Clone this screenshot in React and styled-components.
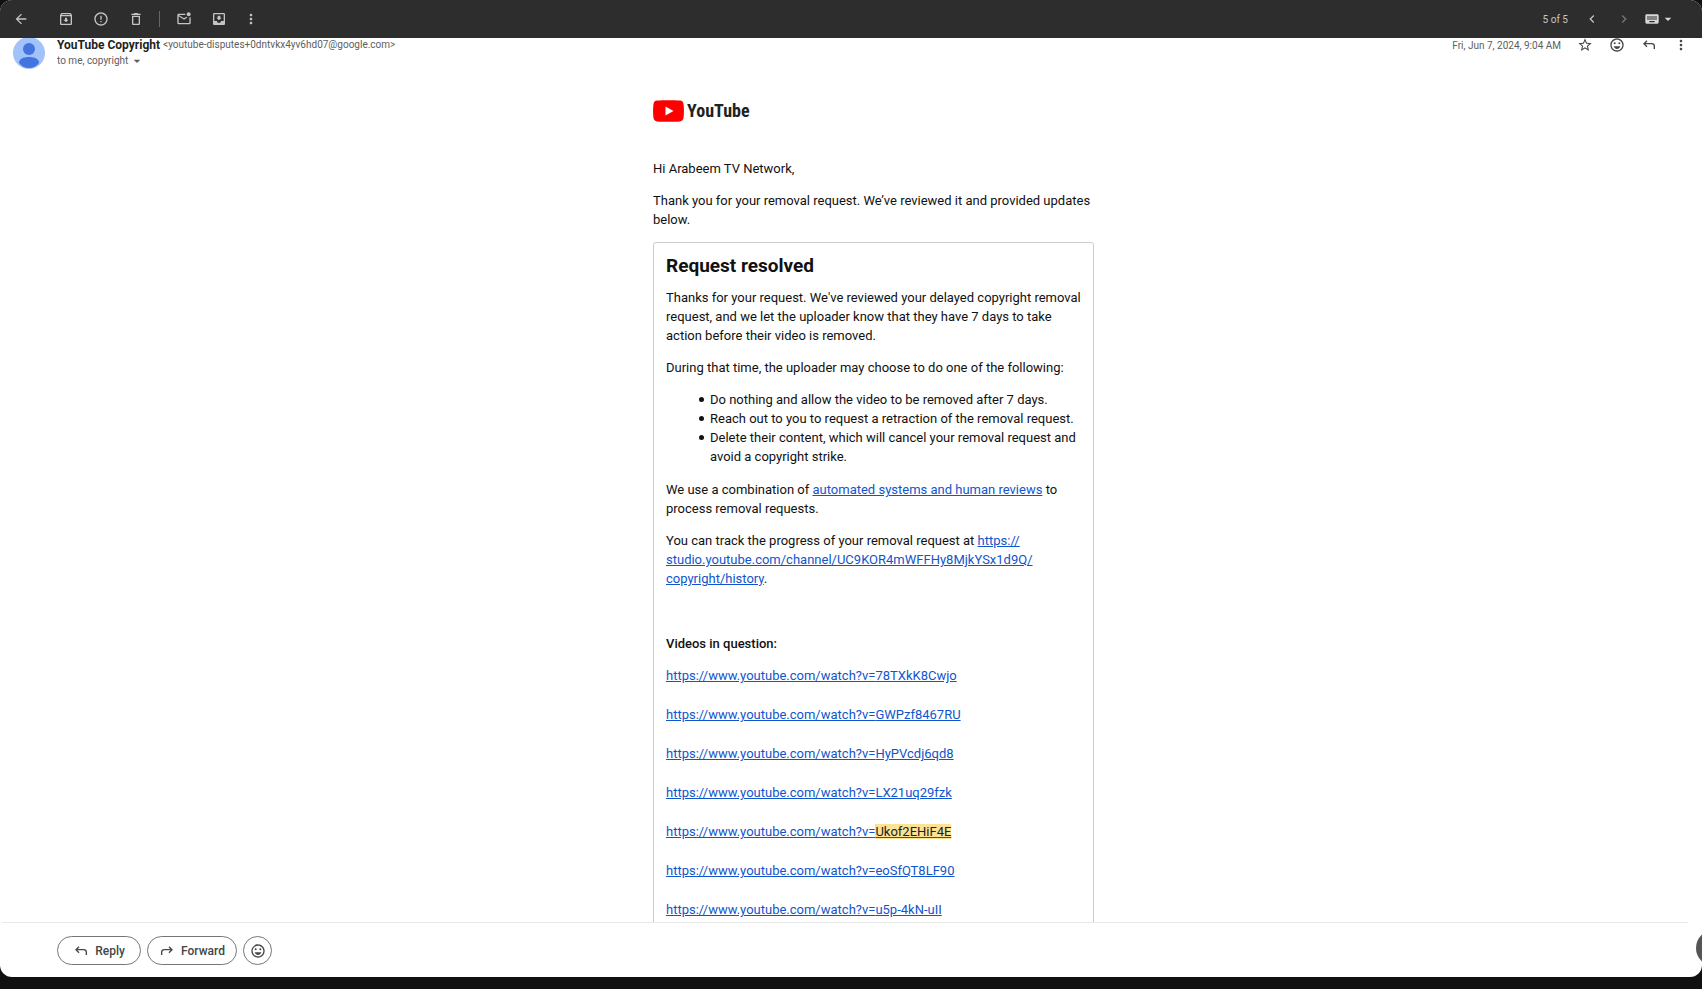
/**
 * Mail message view
 *  * Toolbar on top, the opened message in the middle and the reply actions at the bottom
 */
import React from 'react'
import styled, { createGlobalStyle } from 'styled-components'
import {
    MdArrowBack,
    MdOutlineArchive,
    MdErrorOutline,
    MdDeleteOutline,
    MdOutlineMarkEmailUnread,
    MdMoveToInbox,
    MdMoreVert,
    MdChevronLeft,
    MdChevronRight,
    MdKeyboard,
    MdArrowDropDown,
    MdStarBorder,
    MdOutlineEmojiEmotions
} from 'react-icons/md'

const VIDEOS = [
    { id: '78TXkK8Cwjo' },
    { id: 'GWPzf8467RU' },
    { id: 'HyPVcdj6qd8' },
    { id: 'LX21uq29fzk' },
    { id: 'Ukof2EHiF4E', found: true },
    { id: 'eoSfQT8LF90' },
    { id: 'u5p-4kN-uII' }
]

/**
 * Curved arrow of the reply and forward buttons
 */
function ReplyIcon({ flip }) {
    return (
        <svg width="16" height="16" viewBox="0 0 24 24" fill="none" stroke="currentColor" strokeWidth="2" aria-hidden="true">
            <g transform={flip ? 'translate(24 0) scale(-1 1)' : undefined}>
                <path d="M9 5.500 4.500 10 9 14.500" />
                <path d="M4.500 10H16a4 4 0 0 1 4 4v4" />
            </g>
        </svg>
    )
}

function Toolbar() {
    return (
        <Bar>
            <BackButton aria-label="Back to inbox"><MdArrowBack /></BackButton>
            <ToolButton aria-label="Archive"><MdOutlineArchive /></ToolButton>
            <ToolButton aria-label="Report spam"><MdErrorOutline /></ToolButton>
            <ToolButton aria-label="Delete"><MdDeleteOutline /></ToolButton>
            <Separator />
            <ToolButton aria-label="Mark as unread"><MdOutlineMarkEmailUnread /></ToolButton>
            <ToolButton aria-label="Move to"><MdMoveToInbox /></ToolButton>
            <ToolButton $width={30} aria-label="More"><MdMoreVert /></ToolButton>
            <Pager>
                <span>5 of 5</span>
                <ToolButton $width={32} aria-label="Newer"><MdChevronLeft /></ToolButton>
                <ToolButton $width={32} aria-label="Older" disabled><MdChevronRight /></ToolButton>
                <InputTools aria-label="Input tools">
                    <MdKeyboard />
                    <MdArrowDropDown />
                </InputTools>
            </Pager>
        </Bar>
    )
}

function MessageHeader() {
    return (
        <Header>
            <Avatar viewBox="0 0 32 32" aria-hidden="true">
                <circle cx="16" cy="16" r="16" fill="#a1c2fa" />
                <circle cx="16" cy="12" r="6" fill="#4374e0" />
                <path d="M6 26c0-4 4-6 10-6s10 2 10 6c-2 3-6 5-10 5s-8-2-10-5z" fill="#4374e0" />
            </Avatar>
            <Sender>
                <SenderLine>
                    <SenderName>YouTube Copyright</SenderName>
                    <span>&lt;youtube-disputes+0dntvkx4yv6hd07@google.com&gt;</span>
                </SenderLine>
                <Recipients>to me, copyright <MdArrowDropDown /></Recipients>
            </Sender>
            <Actions>
                <time>Fri, Jun 7, 2024, 9:04 AM</time>
                <MessageButton aria-label="Star"><MdStarBorder /></MessageButton>
                <MessageButton aria-label="Add reaction"><MdOutlineEmojiEmotions /></MessageButton>
                <MessageButton aria-label="Reply"><ReplyIcon /></MessageButton>
                <MessageButton aria-label="More"><MdMoreVert /></MessageButton>
            </Actions>
        </Header>
    )
}

function Email() {
    return (
        <EmailArea>
            <EmailColumn>
                <Logo>
                    <svg width="31" height="22" viewBox="0 0 31 22" aria-hidden="true">
                        <path d="M4 .6C10 0 21 0 27 .6c2 .2 3.200 1.400 3.500 3.400.6 4 .6 10 0 14-.3 2-1.500 3.200-3.500 3.400-6 .6-17 .6-23 0C2 21.200.8 20 .5 18c-.6-4-.6-10 0-14C.8 2 2 .8 4 .6z" fill="#f00" />
                        <path d="M12.500 6.500v9l8-4.500z" fill="#fff" />
                    </svg>
                    <span>YouTube</span>
                </Logo>
                <p>Hi Arabeem TV Network,</p>
                <p>Thank you for your removal request. We’ve reviewed it and provided updates below.</p>
                <Card>
                    <h2>Request resolved</h2>
                    <p>
                        Thanks for your request. We've reviewed your delayed copyright removal request, and we let
                        the uploader know that they have 7 days to take action before their video is removed.
                    </p>
                    <p>During that time, the uploader may choose to do one of the following:</p>
                    <Options>
                        <li>Do nothing and allow the video to be removed after 7 days.</li>
                        <li>Reach out to you to request a retraction of the removal request.</li>
                        <li>Delete their content, which will cancel your removal request and avoid a copyright strike.</li>
                    </Options>
                    <p>
                        We use a combination of <TextLink href="#reviews">automated systems and human reviews</TextLink> to
                        process removal requests.
                    </p>
                    <p>
                        You can track the progress of your removal request at{' '}
                        <TextLink href="#history">
                            https://<wbr />studio.youtube.com/channel/UC9KOR4mWFFHy8MjkYSx1d9Q/<wbr />copyright/history
                        </TextLink>.
                    </p>
                    <VideosTitle>Videos in question:</VideosTitle>
                    <VideoList>
                        {VIDEOS.map(({ id, found }) => (
                            <li key={id}>
                                <TextLink href={`#${id}`}>
                                    https://www.youtube.com/watch?v={found ? <Found>{id}</Found> : id}
                                </TextLink>
                            </li>
                        ))}
                    </VideoList>
                </Card>
            </EmailColumn>
        </EmailArea>
    )
}

export default function App() {
    return (
        <Page>
            <GlobalStyle />
            <Window>
                <Toolbar />
                <Message>
                    <MessageHeader />
                    <Email />
                </Message>
                <Footer>
                    <PillButton $width={84}><ReplyIcon /> Reply</PillButton>
                    <PillButton $width={90}><ReplyIcon flip /> Forward</PillButton>
                    <PillButton $width={29} aria-label="Add reaction"><MdOutlineEmojiEmotions /></PillButton>
                </Footer>
                <SidePanelToggle aria-label="Show side panel" />
            </Window>
        </Page>
    )
}

/**
 * Styling
 */
const GlobalStyle = createGlobalStyle`
    * { box-sizing: border-box; }
    body { margin: 0; background: #111; }
    button {
        padding: 0;
        border: 0;
        background: none;
        color: inherit;
        font: inherit;
        cursor: pointer;
    }
`;

const Page = styled.div`
    height: 100vh;
    padding-bottom: 12px;
    background: #111;
    font-family: Roboto, "Liberation Sans", sans-serif;
`;

const Window = styled.div`
    position: relative;
    display: flex;
    flex-direction: column;
    height: 100%;
    overflow: hidden;
    border-radius: 12px;
    background: #fff;
`;

const Bar = styled.header`
    display: flex;
    flex: none;
    align-items: center;
    height: 38px;
    padding: 0 26px 0 3px;
    background: #2d2d2d;
    color: #c4c4c4;
    font-size: 10px;
`;

const ToolButton = styled.button`
    display: flex;
    align-items: center;
    justify-content: center;
    width: ${({ $width = 35 }) => $width}px;
    height: 32px;
    font-size: 16px;
    &:disabled { color: #777; }
`;

const BackButton = styled(ToolButton)`
    margin-right: 10px;
`;

const Separator = styled.span`
    width: 1px;
    height: 16px;
    margin: 0 6px;
    background: #666;
`;

const Pager = styled.div`
    display: flex;
    align-items: center;
    margin-left: auto;
    > span { margin-right: 8px; }
`;

const InputTools = styled.button`
    display: flex;
    align-items: center;
    margin-left: 4px;
    font-size: 16px;
    color: #d8d8d8;
`;

const Message = styled.main`
    flex: 1;
    min-height: 0;
    overflow: hidden;
`;

const Header = styled.div`
    display: flex;
    height: 32px;
    margin-top: -1px;
    padding: 0 5px 0 13px;
    color: #5e5e5e;
    font-size: 10px;
`;

const Avatar = styled.svg`
    width: 32px;
    height: 32px;
`;

const Sender = styled.div`
    margin-left: 12px;
    line-height: 16px;
    white-space: nowrap;
`;

const SenderLine = styled.div`
    display: flex;
    align-items: center;
    gap: 3px;
`;

const SenderName = styled.strong`
    color: #1f1f1f;
    font-size: 12px;
`;

const Recipients = styled.button`
    display: flex;
    align-items: center;
    gap: 1px;
    svg { width: 16px; height: 16px; }
`;

const Actions = styled.div`
    display: flex;
    align-items: center;
    height: 16px;
    margin-left: auto;
    time { margin-right: 8px; }
`;

const MessageButton = styled(ToolButton)`
    width: 32px;
    height: 16px;
    color: #444746;
`;

const EmailArea = styled.div`
    display: flex;
    justify-content: center;
    padding: 31px 12px 0 57px;
`;

const EmailColumn = styled.article`
    width: 441px;
    color: #111;
    font: 13px/19px Roboto, sans-serif;
    p { margin: 0 0 13px; }
`;

const Logo = styled.div`
    display: flex;
    align-items: center;
    gap: 3px;
    height: 22px;
    margin-bottom: 37px;
    color: #212121;
    font: bold 18px/22px "Liberation Sans Narrow", "Roboto Condensed", Roboto, sans-serif;
`;

const Card = styled.section`
    padding: 10px 12px;
    border: 1px solid #ccc;
    border-radius: 3px;
    h2 {
        margin: 0 0 9px;
        font-size: 19px;
        line-height: 26px;
    }
`;

const Options = styled.ul`
    margin: 0 0 14px;
    padding-left: 33px;
    list-style: none;
    li {
        display: grid;
        grid-template-columns: 11px 1fr;
    }
    li::before {
        content: "";
        width: 5px;
        height: 5px;
        margin-top: 7px;
        border-radius: 50%;
        background: #111;
    }
`;

const TextLink = styled.a`
    color: #1155cc;
    text-decoration: underline;
`;

const VideosTitle = styled.h3`
    margin: 46px 0 13px;
    font-size: 13px;
    font-weight: 500;
`;

const VideoList = styled.ul`
    display: grid;
    gap: 20px;
    margin: 0;
    padding: 0;
    list-style: none;
`;

const Found = styled.mark`
    background: #fde293;
    color: #202124;
`;

const Footer = styled.footer`
    display: flex;
    flex: none;
    gap: 6px;
    margin: 0 14px 0 2px;
    padding: 13px 0 12px 55px;
    border-top: 1px solid #e8e8e8;
    color: #444746;
    font-size: 12px;
    font-weight: 500;
`;

const PillButton = styled.button`
    display: flex;
    align-items: center;
    justify-content: center;
    gap: 6px;
    width: ${({ $width }) => $width}px;
    height: 29px;
    border: 1px solid #747775;
    border-radius: 15px;
    svg { width: 16px; height: 16px; }
`;

/* Sits half outside of the window edge */
const SidePanelToggle = styled.button`
    position: absolute;
    right: -30px;
    bottom: 11px;
    width: 36px;
    height: 36px;
    border-radius: 50%;
    background: #555;
`;
